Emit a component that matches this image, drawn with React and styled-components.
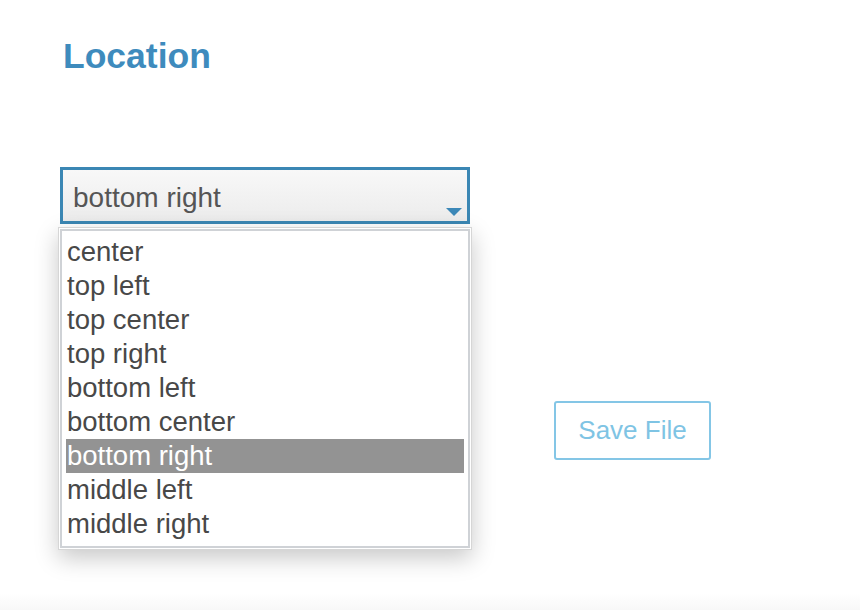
import React from "react";
import styled, { createGlobalStyle } from "styled-components";

const GlobalStyle = createGlobalStyle`
  html, body {
    margin: 0;
    padding: 0;
    background: #ffffff;
  }
  body {
    font-family: "Liberation Sans", Arial, sans-serif;
  }
`;

const options = [
  "center",
  "top left",
  "top center",
  "top right",
  "bottom left",
  "bottom center",
  "bottom right",
  "middle left",
  "middle right",
];

const App = () => {
  const selected = "bottom right";
  return (
    <>
      <GlobalStyle />
      <Page>
        <Main>
          <Title>Location</Title>
          <Form>
            <SelectWrap>
              <SelectBox>
                <span>{selected}</span>
                <Arrow viewBox="0 0 16 8">
                  <path d="M0 0 H16 L8 8 Z" fill="#3c88b8" />
                </Arrow>
              </SelectBox>
              <Dropdown>
                <OptionList>
                  {options.map((o) => (
                    <Option key={o} active={o === selected}>
                      {o}
                    </Option>
                  ))}
                </OptionList>
              </Dropdown>
            </SelectWrap>
            <Actions>
              <SaveButton>Save File</SaveButton>
            </Actions>
          </Form>
        </Main>
        <Footer />
      </Page>
    </>
  );
};

const Page = styled.div`
  width: 860px;
  height: 610px;
  display: flex;
  flex-direction: column;
  overflow: hidden;
`;

const Main = styled.main`
  flex: 1;
  padding: 36px 0 0 60px;
`;

const Title = styled.h1`
  margin: 0 0 0 3px;
  font-family: "Liberation Sans", Arial, sans-serif;
  font-size: 35.5px;
  font-weight: 700;
  line-height: 40px;
  color: #3e8bbd;
`;

const Form = styled.div`
  margin-top: 91px;
  display: flex;
  flex-direction: column;
`;

const SelectWrap = styled.div`
  position: relative;
  width: 410px;
`;

const SelectBox = styled.div`
  box-sizing: border-box;
  height: 57px;
  border: 3px solid #3b87b4;
  background: linear-gradient(#f8f8f8, #ececec);
  padding: 11px 0 0 10px;
  position: relative;
  font-size: 28px;
  line-height: 34px;
  color: #555555;
`;

const Arrow = styled.svg`
  position: absolute;
  right: 5px;
  bottom: 5px;
  width: 16px;
  height: 8px;
`;

const Dropdown = styled.div`
  position: absolute;
  z-index: 5;
  top: 60px;
  left: -2px;
  width: 414px;
  box-sizing: border-box;
  background: #ffffff;
  border: 1px solid #d6d6d6;
  padding: 1px;
  box-shadow: 0 8px 22px rgba(0, 0, 0, 0.22);
`;

const OptionList = styled.ul`
  list-style: none;
  margin: 0;
  border: 2px solid #cfd2d6;
  padding: 4px 4px 5px 4px;
`;

const Option = styled.li`
  height: 34px;
  line-height: 34px;
  padding-left: 1px;
  font-size: 27.5px;
  color: ${(p) => (p.active ? "#ffffff" : "#484848")};
  background: ${(p) => (p.active ? "#939393" : "transparent")};
`;

const Actions = styled.div`
  display: flex;
  padding: 177px 0 0 494px;
`;

const SaveButton = styled.button`
  box-sizing: border-box;
  width: 157px;
  height: 59px;
  background: #ffffff;
  border: 2px solid #84c6e6;
  border-radius: 3px;
  font-family: "Liberation Sans", Arial, sans-serif;
  font-size: 26px;
  color: #7fc4e4;
  cursor: pointer;
`;

const Footer = styled.footer`
  height: 17px;
  background: linear-gradient(#ffffff, #f8f8f8);
`;

export default App;
